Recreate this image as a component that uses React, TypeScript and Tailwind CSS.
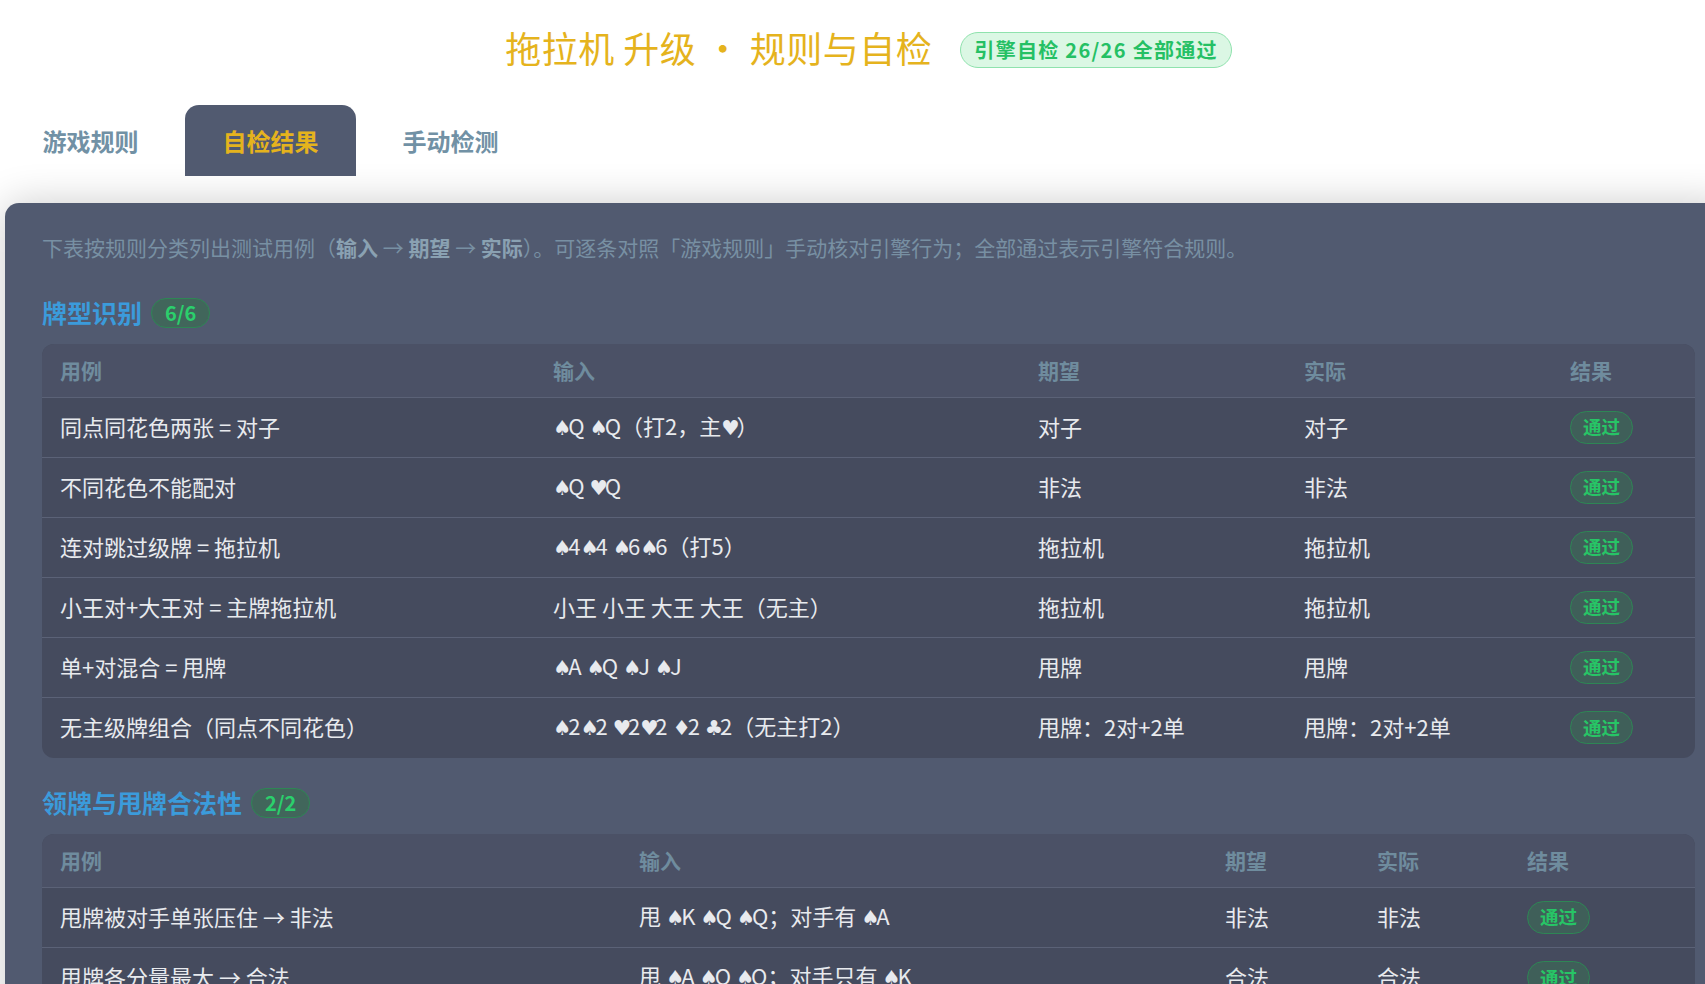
import React from 'react';

type Row = { name: string; input: string; expect: string; actual: string };

const recognition: Row[] = [
  { name: '同点同花色两张 = 对子', input: '♠Q ♠Q（打2，主♥）', expect: '对子', actual: '对子' },
  { name: '不同花色不能配对', input: '♠Q ♥Q', expect: '非法', actual: '非法' },
  { name: '连对跳过级牌 = 拖拉机', input: '♠4♠4 ♠6♠6（打5）', expect: '拖拉机', actual: '拖拉机' },
  { name: '小王对+大王对 = 主牌拖拉机', input: '小王 小王 大王 大王（无主）', expect: '拖拉机', actual: '拖拉机' },
  { name: '单+对混合 = 甩牌', input: '♠A ♠Q ♠J ♠J', expect: '甩牌', actual: '甩牌' },
  { name: '无主级牌组合（同点不同花色）', input: '♠2♠2 ♥2♥2 ♦2 ♣2（无主打2）', expect: '甩牌：2对+2单', actual: '甩牌：2对+2单' },
];

const leading: Row[] = [
  { name: '甩牌被对手单张压住 → 非法', input: '甩 ♠K ♠Q ♠Q；对手有 ♠A', expect: '非法', actual: '非法' },
  { name: '甩牌各分量最大 → 合法', input: '甩 ♠A ♠Q ♠Q；对手只有 ♠K', expect: '合法', actual: '合法' },
];

// suits come from DejaVu, tightened so they sit narrow like the reference
const Cards = ({ text }: { text: string }) => (
  <>
    {text.split(/([♠♥♦♣])/).map((part, i) =>
      /[♠♥♦♣]/.test(part) ? (
        <span key={i} className="font-['DejaVu_Sans',sans-serif] text-[20.5px] tracking-[-3.2px]">
          {part}
        </span>
      ) : (
        <React.Fragment key={i}>{part}</React.Fragment>
      )
    )}
  </>
);

const PassPill = () => (
  <span className="inline-flex items-center h-[33px] px-[12px] rounded-full border border-[#2e8655] bg-[#3f5f59] text-[#27c566] text-[18.5px] font-bold">
    通过
  </span>
);

const Section = ({ title, count, rows, cols }: { title: string; count: string; rows: Row[]; cols: string }) => (
  <section>
    {/* Heading */}
    <div className="flex items-center gap-[9px] h-[37px]">
      <h2 className="text-[25px] font-bold text-[#3b9bdb]">{title}</h2>
      <span className="inline-flex items-center h-[30px] px-[13px] rounded-full border border-[#2e8655] bg-[#41665b] text-[#2bcf6c] text-[20px] font-bold">
        {count}
      </span>
    </div>

    {/* Table */}
    <div className="mt-[13px] rounded-[12px] overflow-hidden bg-[#454b5e]">
      <div className={`grid ${cols} h-[54px] items-center bg-[#4b5166] border-b border-[#5b6277] text-[21px] font-bold text-[#6f8c9e]`}>
        <div className="pl-[18px]">用例</div>
        <div className="pl-[18px]">输入</div>
        <div className="pl-[18px]">期望</div>
        <div className="pl-[18px]">实际</div>
        <div className="pl-[18px]">结果</div>
      </div>
      {rows.map((r, i) => (
        <div
          key={i}
          className={`grid ${cols} h-[60px] pb-[3px] items-center text-[22px] text-[#e8eaee] ${i < rows.length - 1 ? 'border-b border-[#5b6277]' : ''}`}
        >
          <div className="pl-[18px]">{r.name}</div>
          <div className="pl-[18px]">
            <Cards text={r.input} />
          </div>
          <div className="pl-[18px]">{r.expect}</div>
          <div className="pl-[18px]">{r.actual}</div>
          <div className="pl-[18px]">
            <PassPill />
          </div>
        </div>
      ))}
    </div>
  </section>
);

const App = () => {
  return (
    <div className="w-full h-[984px] overflow-hidden bg-white font-['Noto_Sans_CJK_SC',sans-serif]">
      <div className="w-[1737px] px-[5px]">
        {/* Header */}
        <header className="flex items-center justify-center gap-[28px] h-[94px]">
          <h1 className="text-[36px] tracking-[0.5px] text-[#e5b31d]">拖拉机 升级 · 规则与自检</h1>
          <span className="mt-[6px] inline-flex items-center h-[36px] px-[13px] rounded-full border border-[#8fe2ad] bg-[#dbf7e4] text-[#25c064] text-[20px] font-bold tracking-[1.3px]">
            引擎自检 26/26 全部通过
          </span>
        </header>

        {/* Tabs */}
        <nav className="mt-[11px] flex gap-[9px] h-[71px]">
          <button className="w-[171px] text-[24px] font-bold text-[#7191a5]">游戏规则</button>
          <button className="w-[171px] rounded-t-[14px] bg-[#515a70] text-[24px] font-bold text-[#e5b31d]">自检结果</button>
          <button className="w-[171px] text-[24px] font-bold text-[#7191a5]">手动检测</button>
        </nav>

        {/* Panel */}
        <main className="mt-[27px] rounded-t-[14px] bg-[#515a70] px-[37px] pt-[28px] pb-10 shadow-[0_0_40px_rgba(0,0,0,0.2)]">
          <p className="text-[21px] leading-[32px] text-[#7890a3]">
            下表按规则分类列出测试用例（<b className="text-[#8aa1b2]">输入</b> → <b className="text-[#8aa1b2]">期望</b> →{' '}
            <b className="text-[#8aa1b2]">实际</b>）。可逐条对照「游戏规则」手动核对引擎行为；全部通过表示引擎符合规则。
          </p>

          <div className="mt-[31px]">
            <Section title="牌型识别" count="6/6" rows={recognition} cols="grid-cols-[493px_485px_266px_266px_1fr]" />
          </div>

          <div className="mt-[26px]">
            <Section title="领牌与甩牌合法性" count="2/2" rows={leading} cols="grid-cols-[579px_586px_152px_150px_1fr]" />
          </div>
        </main>
      </div>
    </div>
  );
};

export default App;
